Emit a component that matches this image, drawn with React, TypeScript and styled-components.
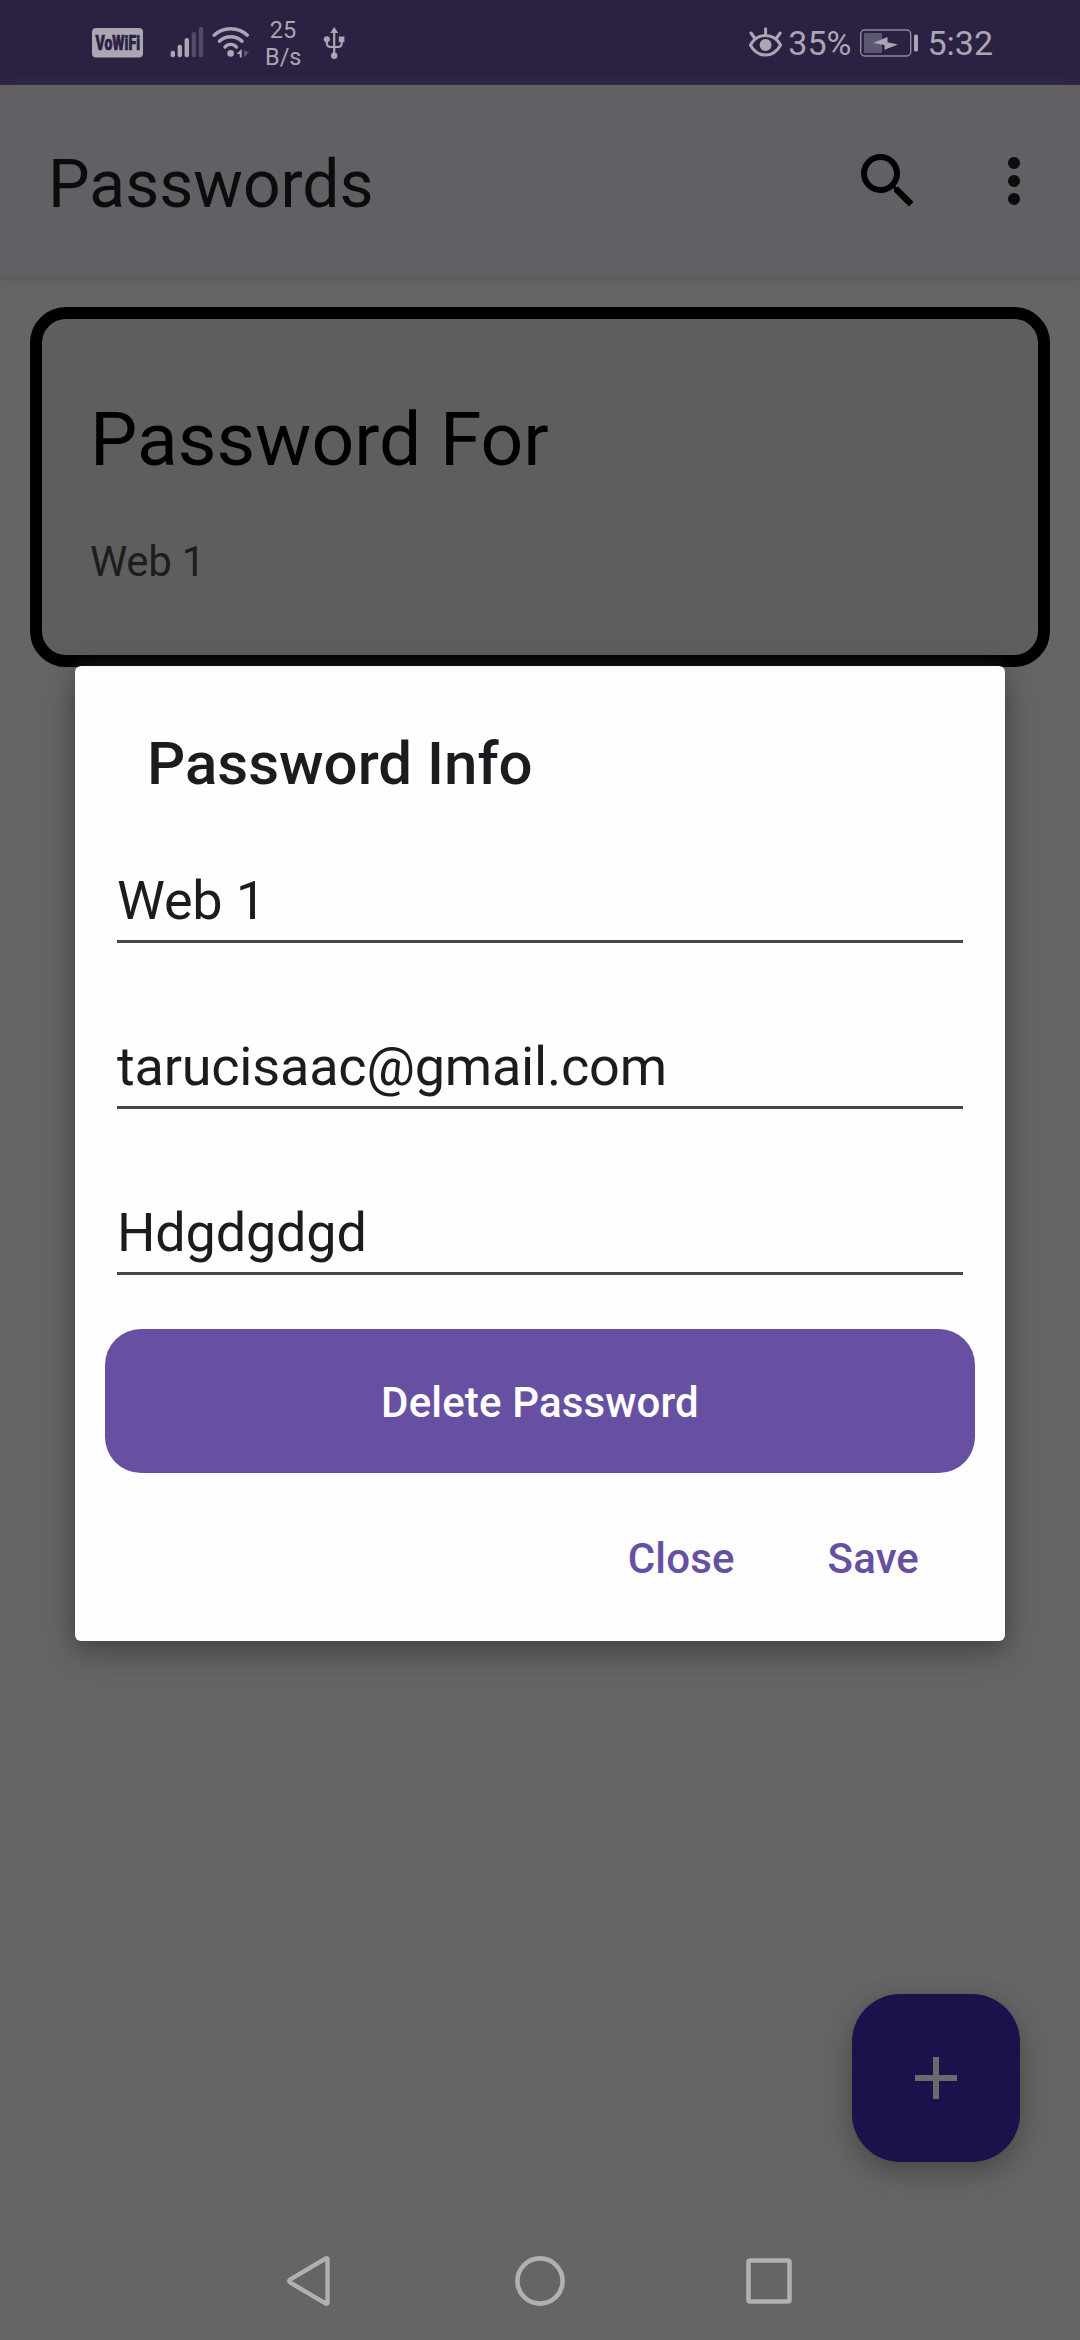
import React from "react";
import styled, { createGlobalStyle } from "styled-components";

const GlobalStyle = createGlobalStyle`
  * { box-sizing: border-box; }
  body { margin: 0; background: #676467; font-family: Roboto, "Noto Sans", sans-serif; }
  button { font: inherit; border: 0; padding: 0; margin: 0; background: none; }
  svg { display: block; }
`;

const Screen = styled.div`
  position: relative;
  width: 1080px;
  height: 2340px;
  display: flex;
  flex-direction: column;
  overflow: hidden;
  background: #676467;
`;

const StatusBar = styled.header`
  height: 85px;
  flex: none;
  display: flex;
  justify-content: space-between;
  padding: 0 87px 0 92px;
  background: #2b2142;
  color: #aaa6b3;
`;

const StatusGroup = styled.div`
  display: flex;
  align-items: center;
  height: 85px;
`;

const NetSpeed = styled.div`
  width: 36px;
  margin-left: 13px;
  margin-top: 2px;
  font-size: 23.5px;
  line-height: 27px;
  text-align: center;
`;

const StatusText = styled.span<{ $gap: number }>`
  font-size: 34px;
  line-height: 40px;
  margin-left: ${(p) => p.$gap}px;
  padding-top: 1px;
`;

const AppBar = styled.div`
  height: 192px;
  flex: none;
  display: flex;
  align-items: center;
  padding: 0 30px 0 48px;
  background: #625f65;
  box-shadow: 0 3px 12px rgba(90, 92, 80, 0.5), 0 1px 3px rgba(80, 80, 76, 0.6);
`;

const AppTitle = styled.h1`
  flex: 1;
  margin: 7px 0 0;
  font-size: 66px;
  font-weight: 400;
  line-height: 78px;
  color: #0c0c0c;
`;

const IconButton = styled.button<{ $gap?: number }>`
  width: 72px;
  height: 72px;
  margin-left: ${(p) => p.$gap ?? 0}px;
`;

const Content = styled.main`
  flex: 1;
  padding: 30px;
`;

const PasswordCard = styled.section`
  height: 360px;
  border: 12px solid #000;
  border-radius: 36px;
  padding: 75px 48px 0;
  background: #5e5e5e;
`;

const CardTitle = styled.h2`
  margin: 0;
  font-size: 75px;
  font-weight: 400;
  line-height: 90px;
  color: #000;
`;

const CardSubtitle = styled.p`
  margin: 53px 0 0;
  font-size: 42px;
  line-height: 50px;
  letter-spacing: -0.3px;
  color: #1d1d21;
`;

const NavBar = styled.nav`
  height: 120px;
  flex: none;
  display: flex;
  justify-content: center;
  align-items: center;
  gap: 170px;
  padding-top: 2px;
  background: #656565;
`;

const Fab = styled.button`
  position: absolute;
  right: 60px;
  bottom: 178px;
  width: 168px;
  height: 168px;
  border-radius: 48px;
  background: #1c114b;
  display: flex;
  align-items: center;
  justify-content: center;
  box-shadow: 0 12px 24px rgba(60, 60, 54, 0.5), 0 2px 18px rgba(80, 84, 76, 0.5);
`;

const Dialog = styled.div`
  position: absolute;
  left: 75px;
  top: 666px;
  width: 930px;
  height: 975px;
  padding: 0 30px;
  display: flex;
  flex-direction: column;
  border-radius: 6px;
  background: #fefefe;
  box-shadow: 0 12px 30px rgba(50, 50, 50, 0.55), 0 0 18px rgba(70, 70, 70, 0.4);
`;

const DialogTitle = styled.h2`
  margin: 62px 0 0 42px;
  font-size: 60px;
  font-weight: 500;
  line-height: 71px;
  color: #1c1b1f;
`;

const Fields = styled.div`
  display: flex;
  flex-direction: column;
  gap: 92px;
  margin: 70px 12px 0;
`;

const Field = styled.div`
  height: 74px;
  border-bottom: 3px solid #49454f;
  font-size: 54px;
  line-height: 63px;
  letter-spacing: -0.2px;
  color: #1c1b1f;
  white-space: nowrap;
`;

const DeleteButton = styled.button`
  height: 144px;
  flex: none;
  margin-top: 54px;
  padding-top: 3px;
  border-radius: 36px;
  background: #6750a1;
  color: #fff;
  font-size: 42px;
  font-weight: 500;
  letter-spacing: 0.15px;
`;

const Actions = styled.div`
  display: flex;
  justify-content: flex-end;
  gap: 93px;
  margin-top: 60px;
  padding-right: 56px;
`;

const TextButton = styled.button`
  font-size: 42px;
  font-weight: 500;
  line-height: 51px;
  letter-spacing: 0.15px;
  color: #6750a1;
`;

const NetworkIcons = () => (
  <svg width="160" height="40" viewBox="92 23 160 40" fill="#aaa6b3">
    <rect x="92" y="28" width="51" height="29.5" rx="4" />
    <text
      x="95.5"
      y="49.8"
      fontSize="20"
      fontWeight="900"
      fill="#2b2142"
      stroke="#2b2142"
      strokeWidth="0.7"
      textLength="44.5"
      lengthAdjust="spacingAndGlyphs"
    >
      VoWiFi
    </text>
    <rect x="170.6" y="50.7" width="4.4" height="6.6" rx="2" />
    <rect x="177.6" y="44.7" width="4.4" height="12.6" rx="2" />
    <rect x="184.6" y="38" width="4.4" height="19.3" rx="2" />
    <rect x="191.7" y="32" width="4.4" height="25.3" rx="2" fill="#534b66" />
    <rect x="198.8" y="26.7" width="4.4" height="30.6" rx="2" fill="#534b66" />
    <g fill="none" stroke="#aaa6b3" strokeWidth="3.4" strokeLinecap="round">
      <path d="M214 35.2Q221 28.7 230.7 28.7T247.4 35.2" />
      <path d="M219.4 41.3Q224 36.8 230.7 36.8T242 41.3" />
      <path d="M225 47.1Q227 44.4 230.7 44.4T236.4 47.1" />
    </g>
    <circle cx="230.6" cy="53.4" r="3.3" />
    <path d="M241.7 49v8.4h-2V54h-3.2z" />
    <path d="M244.2 49.5V57l5-5.3h-2.7z" fill="#635c74" />
  </svg>
);

const UsbIcon = styled.svg`
  margin-left: 21px;
`;

const EyeIcon = () => (
  <svg width="36" height="36" viewBox="748 25 36 36" fill="none" stroke="#aaa6b3" strokeWidth="3" strokeLinecap="round">
    <path d="M750.4 45C754 38.5 759 35.4 765.6 35.4S777 38.5 780.6 45C777 51.8 772 55 765.6 55S754 51.8 750.4 45Z" strokeLinejoin="round" />
    <circle cx="765.6" cy="45" r="6" fill="#aaa6b3" stroke="none" />
    <path d="M765.6 28.8V35M751 33l3.6 5M780.2 33l-3.6 5" />
  </svg>
);

const Battery = styled.svg`
  margin-left: 8px;
`;

const App = () => (
  <>
    <GlobalStyle />
    <Screen>
      <StatusBar>
        <StatusGroup>
          <NetworkIcons />
          <NetSpeed>
            25
            <br />
            B/s
          </NetSpeed>
          <UsbIcon width="24" height="36" viewBox="322 25 24 36" fill="#aaa6b3">
            <path d="M334.2 27l4 6h-8z" />
            <circle cx="334.2" cy="55.8" r="3.2" />
            <circle cx="326.8" cy="39.3" r="3" />
            <rect x="338.8" y="36.5" width="5.6" height="5.6" />
            <path d="M334.2 32v23M326.8 40v3q0 4 4 4h7q4 0 4-4v-3" fill="none" stroke="#aaa6b3" strokeWidth="2.2" />
          </UsbIcon>
        </StatusGroup>
        <StatusGroup>
          <EyeIcon />
          <StatusText $gap={4}>35%</StatusText>
          <Battery width="60" height="30" viewBox="859 27.5 60 30">
            <rect x="860.7" y="29.5" width="50" height="26" rx="4" fill="none" stroke="#8f8a9c" strokeWidth="1.4" />
            <rect x="864" y="32.4" width="18" height="20" rx="1" fill="#5e5771" />
            <path d="M873 42.5l14.5-6v5.2l10.5 2.2-13.5 5.4v-4.7z" fill="#aaa6b3" />
            <rect x="914" y="34" width="4" height="17" rx="1.5" fill="#aaa6b3" />
          </Battery>
          <StatusText $gap={8}>5:32</StatusText>
        </StatusGroup>
      </StatusBar>

      <AppBar>
        <AppTitle>Passwords</AppTitle>
        <IconButton aria-label="Search">
          <svg width="72" height="72" viewBox="0 0 24 24" fill="#000">
            <path d="M15.5 14h-.79l-.28-.27A6.47 6.47 0 0 0 16 9.5 6.5 6.5 0 1 0 9.5 16c1.61 0 3.09-.59 4.23-1.57l.27.28v.79l5 4.99L20.49 19l-4.99-5zm-6 0C7.01 14 5 11.99 5 9.5S7.01 5 9.5 5 14 7.01 14 9.5 11.99 14 9.5 14z" />
          </svg>
        </IconButton>
        <IconButton $gap={54} aria-label="More options">
          <svg width="72" height="72" viewBox="0 0 24 24" fill="#0c0c0c">
            <circle cx="12" cy="6" r="2" />
            <circle cx="12" cy="12" r="2" />
            <circle cx="12" cy="18" r="2" />
          </svg>
        </IconButton>
      </AppBar>

      <Content>
        <PasswordCard>
          <CardTitle>Password For</CardTitle>
          <CardSubtitle>Web 1</CardSubtitle>
        </PasswordCard>
      </Content>

      <NavBar>
        <svg width="60" height="60" viewBox="280 2251 60 60" fill="none" stroke="#b0b0b0" strokeWidth="4.4" strokeLinejoin="round">
          <path d="M327.5 2258.8V2303.2Q327 2304 325.5 2303.4L290 2282.4Q288.4 2281 290 2279.6L325.5 2258.6Q327 2258 327.5 2258.8Z" />
        </svg>
        <svg width="60" height="60" viewBox="510 2251 60 60" fill="none" stroke="#b0b0b0" strokeWidth="4.6">
          <circle cx="540" cy="2281" r="22.6" />
        </svg>
        <svg width="60" height="60" viewBox="740 2251 60 60" fill="none" stroke="#b0b0b0" strokeWidth="4.6">
          <rect x="748.5" y="2260.5" width="41" height="41" rx="1.5" />
        </svg>
      </NavBar>

      <Fab aria-label="Add password">
        <svg width="72" height="72" viewBox="0 0 24 24" fill="#6b696d">
          <path d="M19 13h-6v6h-2v-6H5v-2h6V5h2v6h6z" />
        </svg>
      </Fab>

      <Dialog role="dialog">
        <DialogTitle>Password Info</DialogTitle>
        <Fields>
          <Field>Web 1</Field>
          <Field>tarucisaac@gmail.com</Field>
          <Field>Hdgdgdgd</Field>
        </Fields>
        <DeleteButton>Delete Password</DeleteButton>
        <Actions>
          <TextButton>Close</TextButton>
          <TextButton>Save</TextButton>
        </Actions>
      </Dialog>
    </Screen>
  </>
);

export default App;
